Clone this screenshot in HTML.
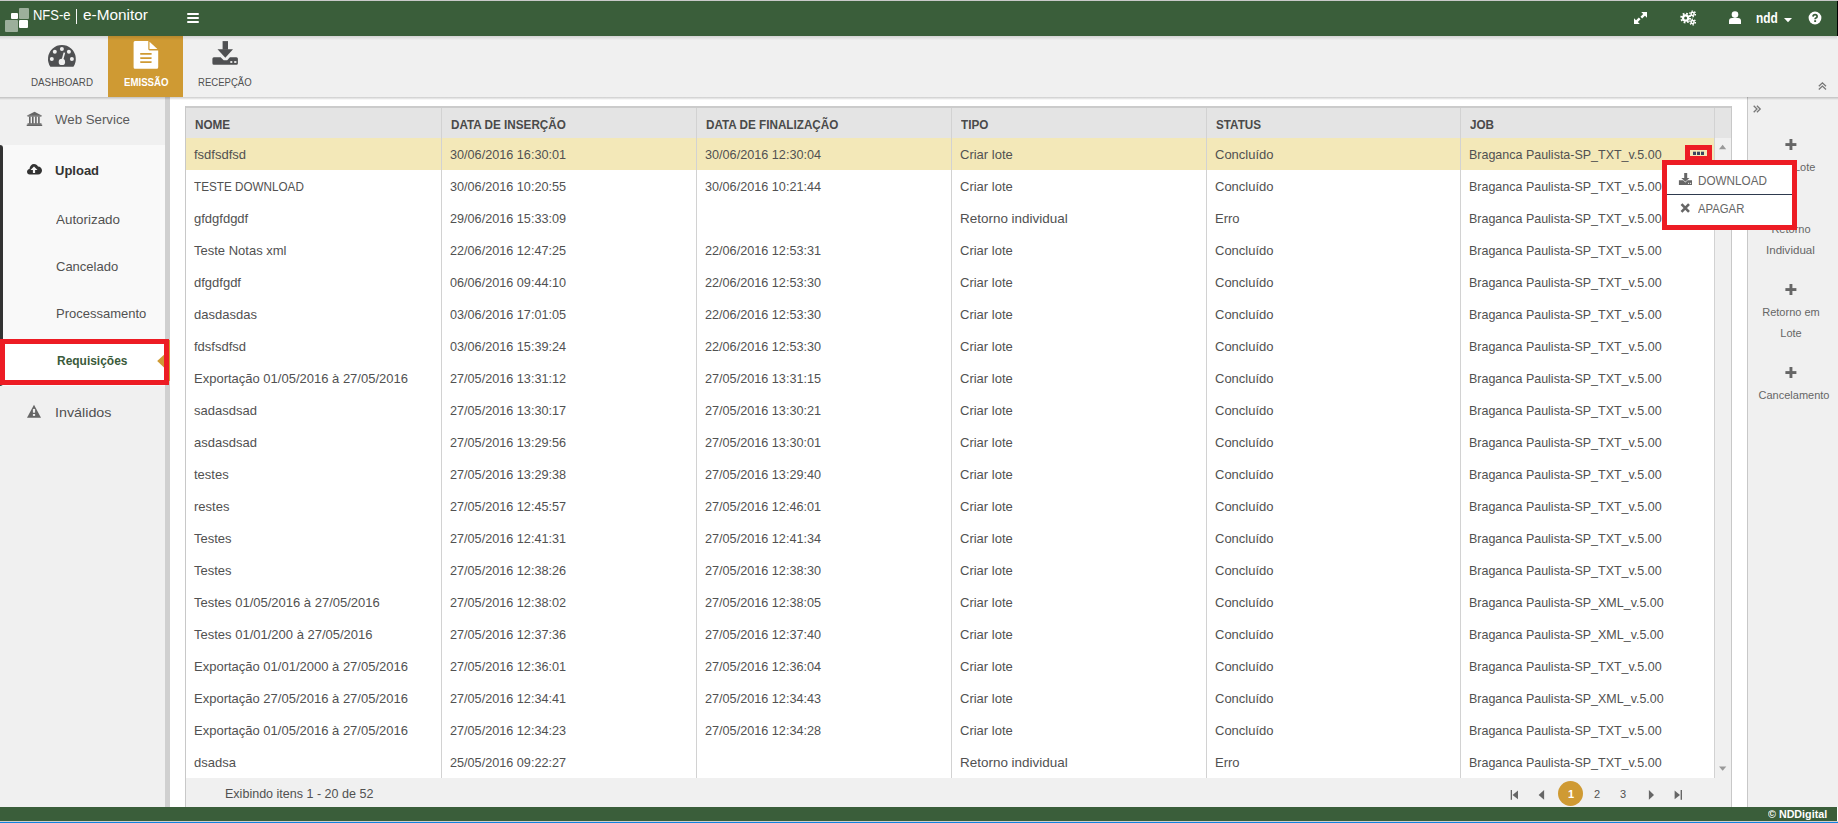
<!DOCTYPE html>
<html><head><meta charset="utf-8">
<style>
*{box-sizing:border-box;margin:0;padding:0}
html,body{width:1838px;height:823px;overflow:hidden;background:#fff;font-family:"Liberation Sans",sans-serif;color:#555;position:relative}
.a{position:absolute}
.t{position:absolute;white-space:nowrap;line-height:1}
svg.a{overflow:visible}
</style></head><body>
<div class="a" style="left:0px;top:0px;width:1838px;height:1px;background:#c9c9c9;"></div>
<div class="a" style="left:0px;top:1px;width:1837px;height:35px;background:#3a5e3a;"></div>
<div class="a" style="left:1837px;top:1px;width:1px;height:37px;background:#000;"></div>
<div class="a" style="left:0px;top:36px;width:1838px;height:61px;background:#f0f0f0;"></div>
<div class="a" style="left:108px;top:36px;width:75px;height:61px;background:#cf9a33;"></div>
<div class="a" style="left:0px;top:97px;width:165px;height:710px;background:#f0f0f0;"></div>
<div class="a" style="left:3px;top:145px;width:162px;height:241px;background:#f9f9f9;"></div>
<div class="a" style="left:0px;top:145px;width:3px;height:241px;background:#333;border-radius:0 3px 3px 0"></div>
<div class="a" style="left:165px;top:97px;width:5px;height:710px;background:#d0d0d0;"></div>
<div class="a" style="left:1747px;top:97px;width:1px;height:710px;background:#c8c8c8;"></div>
<div class="a" style="left:1748px;top:97px;width:90px;height:710px;background:#f0f0f0;"></div>
<div class="a" style="left:0px;top:97px;width:1838px;height:3px;background:linear-gradient(rgba(0,0,0,0.2),rgba(0,0,0,0.1) 50%,rgba(0,0,0,0));"></div>
<div class="a" style="left:0px;top:36px;width:1837px;height:4px;background:linear-gradient(rgba(0,0,0,0.12),rgba(0,0,0,0));"></div>
<div class="a" style="left:0px;top:807px;width:1837px;height:14px;background:#3a5e3a;"></div>
<div class="a" style="left:0px;top:821px;width:1838px;height:1px;background:#cfcfcf;"></div>
<div class="a" style="left:0px;top:822px;width:1838px;height:1px;background:#0f82e0;"></div>
<div class="a" style="left:185px;top:106px;width:1547px;height:2px;background:#cbcbcb;"></div>
<div class="a" style="left:185px;top:108px;width:1547px;height:30px;background:#e4e4e4;"></div>
<div class="a" style="left:185px;top:138px;width:1529px;height:640px;background:#ffffff;"></div>
<div class="a" style="left:1714px;top:138px;width:18px;height:640px;background:#f0f0f0;"></div>
<div class="a" style="left:185px;top:778px;width:1547px;height:29px;background:#f0f0f0;"></div>
<div class="a" style="left:186px;top:138px;width:1528px;height:32px;background:#f3e8b8;"></div>
<div class="a" style="left:185px;top:106px;width:1px;height:701px;background:#c8c8c8;"></div>
<div class="a" style="left:1731px;top:106px;width:1px;height:701px;background:#c8c8c8;"></div>
<div class="a" style="left:441px;top:108px;width:1px;height:670px;background:#d2d2d2;"></div>
<div class="a" style="left:696px;top:108px;width:1px;height:670px;background:#d2d2d2;"></div>
<div class="a" style="left:951px;top:108px;width:1px;height:670px;background:#d2d2d2;"></div>
<div class="a" style="left:1206px;top:108px;width:1px;height:670px;background:#d2d2d2;"></div>
<div class="a" style="left:1460px;top:108px;width:1px;height:670px;background:#d2d2d2;"></div>
<div class="a" style="left:1714px;top:108px;width:1px;height:670px;background:#d2d2d2;"></div>
<div class="t" style="left:195px;top:118.00px;font-size:13px;font-weight:bold;color:#4a4a4a;transform:scaleX(0.9);transform-origin:0 0;">NOME</div>
<div class="t" style="left:451px;top:118.00px;font-size:13px;font-weight:bold;color:#4a4a4a;transform:scaleX(0.9);transform-origin:0 0;">DATA DE INSERÇÃO</div>
<div class="t" style="left:706px;top:118.00px;font-size:13px;font-weight:bold;color:#4a4a4a;transform:scaleX(0.9);transform-origin:0 0;">DATA DE FINALIZAÇÃO</div>
<div class="t" style="left:961px;top:118.00px;font-size:13px;font-weight:bold;color:#4a4a4a;transform:scaleX(0.9);transform-origin:0 0;">TIPO</div>
<div class="t" style="left:1216px;top:118.00px;font-size:13px;font-weight:bold;color:#4a4a4a;transform:scaleX(0.9);transform-origin:0 0;">STATUS</div>
<div class="t" style="left:1470px;top:118.00px;font-size:13px;font-weight:bold;color:#4a4a4a;transform:scaleX(0.9);transform-origin:0 0;">JOB</div>
<div class="t" style="left:194px;top:148.00px;font-size:13px;font-weight:normal;color:#515151;">fsdfsdfsd</div>
<div class="t" style="left:450px;top:148.00px;font-size:13px;font-weight:normal;color:#515151;transform:scaleX(0.973);transform-origin:0 0;">30/06/2016 16:30:01</div>
<div class="t" style="left:705px;top:148.00px;font-size:13px;font-weight:normal;color:#515151;transform:scaleX(0.973);transform-origin:0 0;">30/06/2016 12:30:04</div>
<div class="t" style="left:960px;top:148.00px;font-size:13px;font-weight:normal;color:#515151;">Criar lote</div>
<div class="t" style="left:1215px;top:148.00px;font-size:13px;font-weight:normal;color:#515151;">Concluído</div>
<div class="t" style="left:1469px;top:148.00px;font-size:13px;font-weight:normal;color:#515151;transform:scaleX(0.96);transform-origin:0 0;">Braganca Paulista-SP_TXT_v.5.00</div>
<div class="t" style="left:194px;top:180.00px;font-size:13px;font-weight:normal;color:#515151;transform:scaleX(0.9);transform-origin:0 0;">TESTE DOWNLOAD</div>
<div class="t" style="left:450px;top:180.00px;font-size:13px;font-weight:normal;color:#515151;transform:scaleX(0.973);transform-origin:0 0;">30/06/2016 10:20:55</div>
<div class="t" style="left:705px;top:180.00px;font-size:13px;font-weight:normal;color:#515151;transform:scaleX(0.973);transform-origin:0 0;">30/06/2016 10:21:44</div>
<div class="t" style="left:960px;top:180.00px;font-size:13px;font-weight:normal;color:#515151;">Criar lote</div>
<div class="t" style="left:1215px;top:180.00px;font-size:13px;font-weight:normal;color:#515151;">Concluído</div>
<div class="t" style="left:1469px;top:180.00px;font-size:13px;font-weight:normal;color:#515151;transform:scaleX(0.96);transform-origin:0 0;">Braganca Paulista-SP_TXT_v.5.00</div>
<div class="t" style="left:194px;top:212.00px;font-size:13px;font-weight:normal;color:#515151;">gfdgfdgdf</div>
<div class="t" style="left:450px;top:212.00px;font-size:13px;font-weight:normal;color:#515151;transform:scaleX(0.973);transform-origin:0 0;">29/06/2016 15:33:09</div>
<div class="t" style="left:960px;top:212.00px;font-size:13px;font-weight:normal;color:#515151;transform:scaleX(1.035);transform-origin:0 0;">Retorno individual</div>
<div class="t" style="left:1215px;top:212.00px;font-size:13px;font-weight:normal;color:#515151;">Erro</div>
<div class="t" style="left:1469px;top:212.00px;font-size:13px;font-weight:normal;color:#515151;transform:scaleX(0.96);transform-origin:0 0;">Braganca Paulista-SP_TXT_v.5.00</div>
<div class="t" style="left:194px;top:244.00px;font-size:13px;font-weight:normal;color:#515151;">Teste Notas xml</div>
<div class="t" style="left:450px;top:244.00px;font-size:13px;font-weight:normal;color:#515151;transform:scaleX(0.973);transform-origin:0 0;">22/06/2016 12:47:25</div>
<div class="t" style="left:705px;top:244.00px;font-size:13px;font-weight:normal;color:#515151;transform:scaleX(0.973);transform-origin:0 0;">22/06/2016 12:53:31</div>
<div class="t" style="left:960px;top:244.00px;font-size:13px;font-weight:normal;color:#515151;">Criar lote</div>
<div class="t" style="left:1215px;top:244.00px;font-size:13px;font-weight:normal;color:#515151;">Concluído</div>
<div class="t" style="left:1469px;top:244.00px;font-size:13px;font-weight:normal;color:#515151;transform:scaleX(0.96);transform-origin:0 0;">Braganca Paulista-SP_TXT_v.5.00</div>
<div class="t" style="left:194px;top:276.00px;font-size:13px;font-weight:normal;color:#515151;">dfgdfgdf</div>
<div class="t" style="left:450px;top:276.00px;font-size:13px;font-weight:normal;color:#515151;transform:scaleX(0.973);transform-origin:0 0;">06/06/2016 09:44:10</div>
<div class="t" style="left:705px;top:276.00px;font-size:13px;font-weight:normal;color:#515151;transform:scaleX(0.973);transform-origin:0 0;">22/06/2016 12:53:30</div>
<div class="t" style="left:960px;top:276.00px;font-size:13px;font-weight:normal;color:#515151;">Criar lote</div>
<div class="t" style="left:1215px;top:276.00px;font-size:13px;font-weight:normal;color:#515151;">Concluído</div>
<div class="t" style="left:1469px;top:276.00px;font-size:13px;font-weight:normal;color:#515151;transform:scaleX(0.96);transform-origin:0 0;">Braganca Paulista-SP_TXT_v.5.00</div>
<div class="t" style="left:194px;top:308.00px;font-size:13px;font-weight:normal;color:#515151;">dasdasdas</div>
<div class="t" style="left:450px;top:308.00px;font-size:13px;font-weight:normal;color:#515151;transform:scaleX(0.973);transform-origin:0 0;">03/06/2016 17:01:05</div>
<div class="t" style="left:705px;top:308.00px;font-size:13px;font-weight:normal;color:#515151;transform:scaleX(0.973);transform-origin:0 0;">22/06/2016 12:53:30</div>
<div class="t" style="left:960px;top:308.00px;font-size:13px;font-weight:normal;color:#515151;">Criar lote</div>
<div class="t" style="left:1215px;top:308.00px;font-size:13px;font-weight:normal;color:#515151;">Concluído</div>
<div class="t" style="left:1469px;top:308.00px;font-size:13px;font-weight:normal;color:#515151;transform:scaleX(0.96);transform-origin:0 0;">Braganca Paulista-SP_TXT_v.5.00</div>
<div class="t" style="left:194px;top:340.00px;font-size:13px;font-weight:normal;color:#515151;">fdsfsdfsd</div>
<div class="t" style="left:450px;top:340.00px;font-size:13px;font-weight:normal;color:#515151;transform:scaleX(0.973);transform-origin:0 0;">03/06/2016 15:39:24</div>
<div class="t" style="left:705px;top:340.00px;font-size:13px;font-weight:normal;color:#515151;transform:scaleX(0.973);transform-origin:0 0;">22/06/2016 12:53:30</div>
<div class="t" style="left:960px;top:340.00px;font-size:13px;font-weight:normal;color:#515151;">Criar lote</div>
<div class="t" style="left:1215px;top:340.00px;font-size:13px;font-weight:normal;color:#515151;">Concluído</div>
<div class="t" style="left:1469px;top:340.00px;font-size:13px;font-weight:normal;color:#515151;transform:scaleX(0.96);transform-origin:0 0;">Braganca Paulista-SP_TXT_v.5.00</div>
<div class="t" style="left:194px;top:372.00px;font-size:13px;font-weight:normal;color:#515151;">Exportação 01/05/2016 à 27/05/2016</div>
<div class="t" style="left:450px;top:372.00px;font-size:13px;font-weight:normal;color:#515151;transform:scaleX(0.973);transform-origin:0 0;">27/05/2016 13:31:12</div>
<div class="t" style="left:705px;top:372.00px;font-size:13px;font-weight:normal;color:#515151;transform:scaleX(0.973);transform-origin:0 0;">27/05/2016 13:31:15</div>
<div class="t" style="left:960px;top:372.00px;font-size:13px;font-weight:normal;color:#515151;">Criar lote</div>
<div class="t" style="left:1215px;top:372.00px;font-size:13px;font-weight:normal;color:#515151;">Concluído</div>
<div class="t" style="left:1469px;top:372.00px;font-size:13px;font-weight:normal;color:#515151;transform:scaleX(0.96);transform-origin:0 0;">Braganca Paulista-SP_TXT_v.5.00</div>
<div class="t" style="left:194px;top:404.00px;font-size:13px;font-weight:normal;color:#515151;">sadasdsad</div>
<div class="t" style="left:450px;top:404.00px;font-size:13px;font-weight:normal;color:#515151;transform:scaleX(0.973);transform-origin:0 0;">27/05/2016 13:30:17</div>
<div class="t" style="left:705px;top:404.00px;font-size:13px;font-weight:normal;color:#515151;transform:scaleX(0.973);transform-origin:0 0;">27/05/2016 13:30:21</div>
<div class="t" style="left:960px;top:404.00px;font-size:13px;font-weight:normal;color:#515151;">Criar lote</div>
<div class="t" style="left:1215px;top:404.00px;font-size:13px;font-weight:normal;color:#515151;">Concluído</div>
<div class="t" style="left:1469px;top:404.00px;font-size:13px;font-weight:normal;color:#515151;transform:scaleX(0.96);transform-origin:0 0;">Braganca Paulista-SP_TXT_v.5.00</div>
<div class="t" style="left:194px;top:436.00px;font-size:13px;font-weight:normal;color:#515151;">asdasdsad</div>
<div class="t" style="left:450px;top:436.00px;font-size:13px;font-weight:normal;color:#515151;transform:scaleX(0.973);transform-origin:0 0;">27/05/2016 13:29:56</div>
<div class="t" style="left:705px;top:436.00px;font-size:13px;font-weight:normal;color:#515151;transform:scaleX(0.973);transform-origin:0 0;">27/05/2016 13:30:01</div>
<div class="t" style="left:960px;top:436.00px;font-size:13px;font-weight:normal;color:#515151;">Criar lote</div>
<div class="t" style="left:1215px;top:436.00px;font-size:13px;font-weight:normal;color:#515151;">Concluído</div>
<div class="t" style="left:1469px;top:436.00px;font-size:13px;font-weight:normal;color:#515151;transform:scaleX(0.96);transform-origin:0 0;">Braganca Paulista-SP_TXT_v.5.00</div>
<div class="t" style="left:194px;top:468.00px;font-size:13px;font-weight:normal;color:#515151;">testes</div>
<div class="t" style="left:450px;top:468.00px;font-size:13px;font-weight:normal;color:#515151;transform:scaleX(0.973);transform-origin:0 0;">27/05/2016 13:29:38</div>
<div class="t" style="left:705px;top:468.00px;font-size:13px;font-weight:normal;color:#515151;transform:scaleX(0.973);transform-origin:0 0;">27/05/2016 13:29:40</div>
<div class="t" style="left:960px;top:468.00px;font-size:13px;font-weight:normal;color:#515151;">Criar lote</div>
<div class="t" style="left:1215px;top:468.00px;font-size:13px;font-weight:normal;color:#515151;">Concluído</div>
<div class="t" style="left:1469px;top:468.00px;font-size:13px;font-weight:normal;color:#515151;transform:scaleX(0.96);transform-origin:0 0;">Braganca Paulista-SP_TXT_v.5.00</div>
<div class="t" style="left:194px;top:500.00px;font-size:13px;font-weight:normal;color:#515151;">restes</div>
<div class="t" style="left:450px;top:500.00px;font-size:13px;font-weight:normal;color:#515151;transform:scaleX(0.973);transform-origin:0 0;">27/05/2016 12:45:57</div>
<div class="t" style="left:705px;top:500.00px;font-size:13px;font-weight:normal;color:#515151;transform:scaleX(0.973);transform-origin:0 0;">27/05/2016 12:46:01</div>
<div class="t" style="left:960px;top:500.00px;font-size:13px;font-weight:normal;color:#515151;">Criar lote</div>
<div class="t" style="left:1215px;top:500.00px;font-size:13px;font-weight:normal;color:#515151;">Concluído</div>
<div class="t" style="left:1469px;top:500.00px;font-size:13px;font-weight:normal;color:#515151;transform:scaleX(0.96);transform-origin:0 0;">Braganca Paulista-SP_TXT_v.5.00</div>
<div class="t" style="left:194px;top:532.00px;font-size:13px;font-weight:normal;color:#515151;">Testes</div>
<div class="t" style="left:450px;top:532.00px;font-size:13px;font-weight:normal;color:#515151;transform:scaleX(0.973);transform-origin:0 0;">27/05/2016 12:41:31</div>
<div class="t" style="left:705px;top:532.00px;font-size:13px;font-weight:normal;color:#515151;transform:scaleX(0.973);transform-origin:0 0;">27/05/2016 12:41:34</div>
<div class="t" style="left:960px;top:532.00px;font-size:13px;font-weight:normal;color:#515151;">Criar lote</div>
<div class="t" style="left:1215px;top:532.00px;font-size:13px;font-weight:normal;color:#515151;">Concluído</div>
<div class="t" style="left:1469px;top:532.00px;font-size:13px;font-weight:normal;color:#515151;transform:scaleX(0.96);transform-origin:0 0;">Braganca Paulista-SP_TXT_v.5.00</div>
<div class="t" style="left:194px;top:564.00px;font-size:13px;font-weight:normal;color:#515151;">Testes</div>
<div class="t" style="left:450px;top:564.00px;font-size:13px;font-weight:normal;color:#515151;transform:scaleX(0.973);transform-origin:0 0;">27/05/2016 12:38:26</div>
<div class="t" style="left:705px;top:564.00px;font-size:13px;font-weight:normal;color:#515151;transform:scaleX(0.973);transform-origin:0 0;">27/05/2016 12:38:30</div>
<div class="t" style="left:960px;top:564.00px;font-size:13px;font-weight:normal;color:#515151;">Criar lote</div>
<div class="t" style="left:1215px;top:564.00px;font-size:13px;font-weight:normal;color:#515151;">Concluído</div>
<div class="t" style="left:1469px;top:564.00px;font-size:13px;font-weight:normal;color:#515151;transform:scaleX(0.96);transform-origin:0 0;">Braganca Paulista-SP_TXT_v.5.00</div>
<div class="t" style="left:194px;top:596.00px;font-size:13px;font-weight:normal;color:#515151;">Testes 01/05/2016 à 27/05/2016</div>
<div class="t" style="left:450px;top:596.00px;font-size:13px;font-weight:normal;color:#515151;transform:scaleX(0.973);transform-origin:0 0;">27/05/2016 12:38:02</div>
<div class="t" style="left:705px;top:596.00px;font-size:13px;font-weight:normal;color:#515151;transform:scaleX(0.973);transform-origin:0 0;">27/05/2016 12:38:05</div>
<div class="t" style="left:960px;top:596.00px;font-size:13px;font-weight:normal;color:#515151;">Criar lote</div>
<div class="t" style="left:1215px;top:596.00px;font-size:13px;font-weight:normal;color:#515151;">Concluído</div>
<div class="t" style="left:1469px;top:596.00px;font-size:13px;font-weight:normal;color:#515151;transform:scaleX(0.96);transform-origin:0 0;">Braganca Paulista-SP_XML_v.5.00</div>
<div class="t" style="left:194px;top:628.00px;font-size:13px;font-weight:normal;color:#515151;">Testes 01/01/200 à 27/05/2016</div>
<div class="t" style="left:450px;top:628.00px;font-size:13px;font-weight:normal;color:#515151;transform:scaleX(0.973);transform-origin:0 0;">27/05/2016 12:37:36</div>
<div class="t" style="left:705px;top:628.00px;font-size:13px;font-weight:normal;color:#515151;transform:scaleX(0.973);transform-origin:0 0;">27/05/2016 12:37:40</div>
<div class="t" style="left:960px;top:628.00px;font-size:13px;font-weight:normal;color:#515151;">Criar lote</div>
<div class="t" style="left:1215px;top:628.00px;font-size:13px;font-weight:normal;color:#515151;">Concluído</div>
<div class="t" style="left:1469px;top:628.00px;font-size:13px;font-weight:normal;color:#515151;transform:scaleX(0.96);transform-origin:0 0;">Braganca Paulista-SP_XML_v.5.00</div>
<div class="t" style="left:194px;top:660.00px;font-size:13px;font-weight:normal;color:#515151;">Exportação 01/01/2000 à 27/05/2016</div>
<div class="t" style="left:450px;top:660.00px;font-size:13px;font-weight:normal;color:#515151;transform:scaleX(0.973);transform-origin:0 0;">27/05/2016 12:36:01</div>
<div class="t" style="left:705px;top:660.00px;font-size:13px;font-weight:normal;color:#515151;transform:scaleX(0.973);transform-origin:0 0;">27/05/2016 12:36:04</div>
<div class="t" style="left:960px;top:660.00px;font-size:13px;font-weight:normal;color:#515151;">Criar lote</div>
<div class="t" style="left:1215px;top:660.00px;font-size:13px;font-weight:normal;color:#515151;">Concluído</div>
<div class="t" style="left:1469px;top:660.00px;font-size:13px;font-weight:normal;color:#515151;transform:scaleX(0.96);transform-origin:0 0;">Braganca Paulista-SP_TXT_v.5.00</div>
<div class="t" style="left:194px;top:692.00px;font-size:13px;font-weight:normal;color:#515151;">Exportação 27/05/2016 à 27/05/2016</div>
<div class="t" style="left:450px;top:692.00px;font-size:13px;font-weight:normal;color:#515151;transform:scaleX(0.973);transform-origin:0 0;">27/05/2016 12:34:41</div>
<div class="t" style="left:705px;top:692.00px;font-size:13px;font-weight:normal;color:#515151;transform:scaleX(0.973);transform-origin:0 0;">27/05/2016 12:34:43</div>
<div class="t" style="left:960px;top:692.00px;font-size:13px;font-weight:normal;color:#515151;">Criar lote</div>
<div class="t" style="left:1215px;top:692.00px;font-size:13px;font-weight:normal;color:#515151;">Concluído</div>
<div class="t" style="left:1469px;top:692.00px;font-size:13px;font-weight:normal;color:#515151;transform:scaleX(0.96);transform-origin:0 0;">Braganca Paulista-SP_XML_v.5.00</div>
<div class="t" style="left:194px;top:724.00px;font-size:13px;font-weight:normal;color:#515151;">Exportação 01/05/2016 à 27/05/2016</div>
<div class="t" style="left:450px;top:724.00px;font-size:13px;font-weight:normal;color:#515151;transform:scaleX(0.973);transform-origin:0 0;">27/05/2016 12:34:23</div>
<div class="t" style="left:705px;top:724.00px;font-size:13px;font-weight:normal;color:#515151;transform:scaleX(0.973);transform-origin:0 0;">27/05/2016 12:34:28</div>
<div class="t" style="left:960px;top:724.00px;font-size:13px;font-weight:normal;color:#515151;">Criar lote</div>
<div class="t" style="left:1215px;top:724.00px;font-size:13px;font-weight:normal;color:#515151;">Concluído</div>
<div class="t" style="left:1469px;top:724.00px;font-size:13px;font-weight:normal;color:#515151;transform:scaleX(0.96);transform-origin:0 0;">Braganca Paulista-SP_TXT_v.5.00</div>
<div class="t" style="left:194px;top:756.00px;font-size:13px;font-weight:normal;color:#515151;">dsadsa</div>
<div class="t" style="left:450px;top:756.00px;font-size:13px;font-weight:normal;color:#515151;transform:scaleX(0.973);transform-origin:0 0;">25/05/2016 09:22:27</div>
<div class="t" style="left:960px;top:756.00px;font-size:13px;font-weight:normal;color:#515151;transform:scaleX(1.035);transform-origin:0 0;">Retorno individual</div>
<div class="t" style="left:1215px;top:756.00px;font-size:13px;font-weight:normal;color:#515151;">Erro</div>
<div class="t" style="left:1469px;top:756.00px;font-size:13px;font-weight:normal;color:#515151;transform:scaleX(0.96);transform-origin:0 0;">Braganca Paulista-SP_TXT_v.5.00</div>
<div class="t" style="left:225px;top:787.00px;font-size:13px;font-weight:normal;color:#515151;transform:scaleX(0.964);transform-origin:0 0;">Exibindo itens 1 - 20 de 52</div>
<div class="t" style="left:55px;top:113.00px;font-size:13px;font-weight:normal;color:#5a5a5a;transform:scaleX(1.02);transform-origin:0 0;">Web Service</div>
<div class="t" style="left:55px;top:164.00px;font-size:13px;font-weight:bold;color:#333;">Upload</div>
<div class="t" style="left:56px;top:213.00px;font-size:13px;font-weight:normal;color:#515151;transform:scaleX(1.03);transform-origin:0 0;">Autorizado</div>
<div class="t" style="left:56px;top:260.00px;font-size:13px;font-weight:normal;color:#515151;">Cancelado</div>
<div class="t" style="left:56px;top:307.00px;font-size:13px;font-weight:normal;color:#515151;">Processamento</div>
<div class="t" style="left:55px;top:406.00px;font-size:13px;font-weight:normal;color:#515151;transform:scaleX(1.1);transform-origin:0 0;">Inválidos</div>
<div class="a" style="left:0px;top:339px;width:169px;height:46px;background:#ed1c24;"></div>
<div class="a" style="left:5px;top:344px;width:159px;height:36px;background:#ffffff;"></div>
<div class="a" style="left:169px;top:340px;width:1px;height:41px;background:#cf9a33;"></div>
<div class="t" style="left:57px;top:354.00px;font-size:13px;font-weight:bold;color:#3a5a3a;transform:scaleX(0.92);transform-origin:0 0;">Requisições</div>
<div class="t" style="left:31px;top:76.69px;font-size:11px;font-weight:normal;color:#515151;transform:scaleX(0.89);transform-origin:0 0;">DASHBOARD</div>
<div class="t" style="left:124px;top:76.69px;font-size:11px;font-weight:bold;color:#fff;transform:scaleX(0.878);transform-origin:0 0;">EMISSÃO</div>
<div class="t" style="left:198px;top:76.69px;font-size:11px;font-weight:normal;color:#515151;transform:scaleX(0.868);transform-origin:0 0;">RECEPÇÃO</div>
<div class="t" style="left:32.5px;top:7.30px;font-size:15px;font-weight:normal;color:#fff;transform:scaleX(0.865);transform-origin:0 0;">NFS-e</div>
<div class="a" style="left:76.2px;top:9px;width:1.3px;height:14.5px;background:rgba(255,255,255,0.95);"></div>
<div class="t" style="left:82.5px;top:7.30px;font-size:15px;font-weight:normal;color:#fff;transform:scaleX(1.025);transform-origin:0 0;">e-Monitor</div>
<div class="t" style="left:1755.5px;top:10.75px;font-size:14px;font-weight:bold;color:#fff;transform:scaleX(0.85);transform-origin:0 0;">ndd</div>
<div class="t" style="left:1768px;top:808.69px;font-size:11px;font-weight:bold;color:#fff;transform:scaleX(0.975);transform-origin:0 0;">© NDDigital</div>
<div class="t" style="left:1731px;width:120px;text-align:center;top:223.69px;font-size:11px;color:#666">Retorno</div>
<div class="t" style="left:1766px;top:244.69px;font-size:11px;color:#666;transform:scaleX(1.05);transform-origin:0 0">Individual</div>
<div class="t" style="left:1731px;width:120px;text-align:center;top:306.69px;font-size:11px;color:#666">Retorno em</div>
<div class="t" style="left:1731px;width:120px;text-align:center;top:327.69px;font-size:11px;color:#666">Lote</div>
<div class="t" style="left:1734px;width:120px;text-align:center;top:389.69px;font-size:11px;color:#666">Cancelamento</div>
<div class="t" style="left:1794px;top:161.69px;font-size:11px;font-weight:normal;color:#666;">Lote</div>
<div class="a" style="left:1685px;top:145px;width:27px;height:20px;background:#ed1c24;"></div>
<div class="a" style="left:1690px;top:150px;width:17px;height:6px;background:#f3e8b8;"></div>
<div class="a" style="left:1662px;top:160px;width:135px;height:70px;background:#ed1c24;"></div>
<div class="a" style="left:1667px;top:165px;width:125px;height:60px;background:#ffffff;"></div>
<div class="a" style="left:1667px;top:194px;width:125px;height:1px;background:#2e3a4e;"></div>
<div class="t" style="left:1698px;top:174.00px;font-size:13px;font-weight:normal;color:#666;transform:scaleX(0.9);transform-origin:0 0;">DOWNLOAD</div>
<div class="t" style="left:1698px;top:202.00px;font-size:13px;font-weight:normal;color:#666;transform:scaleX(0.87);transform-origin:0 0;">APAGAR</div>
<div class="a" style="left:1558px;top:781px;width:25px;height:25px;border-radius:50%;background:#cf9a33"></div>
<div class="t" style="left:1568px;top:788.69px;font-size:11px;font-weight:bold;color:#fff;">1</div>
<div class="t" style="left:1594px;top:788.69px;font-size:11px;font-weight:normal;color:#515151;">2</div>
<div class="t" style="left:1620px;top:788.69px;font-size:11px;font-weight:normal;color:#515151;">3</div>
<div class="a" style="left:11px;top:13px;width:7px;height:6px;background:#ffffff;border-radius:1px"></div>
<div class="a" style="left:19px;top:8px;width:10px;height:11px;background:#9caf9b;border-radius:1px"></div>
<div class="a" style="left:5px;top:20px;width:13px;height:12px;background:#9caf9b;border-radius:1px"></div>
<div class="a" style="left:19px;top:20px;width:9px;height:8px;background:#ffffff;border-radius:1px"></div>
<div class="a" style="left:187px;top:13px;width:12px;height:2px;background:#ffffff;border-radius:1px"></div>
<div class="a" style="left:187px;top:17px;width:12px;height:2px;background:#ffffff;border-radius:1px"></div>
<div class="a" style="left:187px;top:21px;width:12px;height:2px;background:#ffffff;border-radius:1px"></div>
<svg class="a" style="left:1634px;top:12px" width="13" height="12" viewBox="0 0 13 12"><path d="M7.2,0 L13,0 L13,5.8 Z" fill="#fff"/><path d="M0,6.2 L0,12 L5.8,12 Z" fill="#fff"/><path d="M11.3,1.7 L7.3,5.6 M5.7,6.4 L1.7,10.3" stroke="#fff" stroke-width="2.4"/></svg>
<svg class="a" style="left:1679px;top:10px" width="18" height="16" viewBox="0 0 18 16"><circle cx="6.6" cy="8" r="3.7" fill="#fff"/><circle cx="6.6" cy="8" r="4.4" fill="none" stroke="#fff" stroke-width="2" stroke-dasharray="1.75 1.705"/><circle cx="6.6" cy="8" r="1.5" fill="#3a5e3a"/><circle cx="13.6" cy="3.9" r="2.3" fill="#fff"/><circle cx="13.6" cy="3.9" r="2.8" fill="none" stroke="#fff" stroke-width="1.4" stroke-dasharray="1.45 1.48"/><circle cx="13.6" cy="3.9" r="0.8" fill="#3a5e3a"/><circle cx="13.6" cy="12.1" r="2.3" fill="#fff"/><circle cx="13.6" cy="12.1" r="2.8" fill="none" stroke="#fff" stroke-width="1.4" stroke-dasharray="1.45 1.48"/><circle cx="13.6" cy="12.1" r="0.8" fill="#3a5e3a"/></svg>
<svg class="a" style="left:1729px;top:11px" width="12" height="13" viewBox="0 0 12 13"><circle cx="6" cy="3.6" r="3.3" fill="#fff"/><path d="M0,13 L0,10 Q0,7 3,6.9 L9,6.9 Q12,7 12,10 L12,13 Z" fill="#fff"/></svg>
<svg class="a" style="left:1784px;top:18px" width="8" height="5" viewBox="0 0 8 5"><path d="M0,0 L8,0 L4,4.3 Z" fill="#fff"/></svg>
<svg class="a" style="left:1808px;top:11px" width="14" height="14" viewBox="0 0 14 14"><circle cx="7" cy="7" r="6.4" fill="#fff"/><path d="M5,5.6 Q5.1,3.7 7.1,3.7 Q9.1,3.7 9.1,5.4 Q9.1,6.5 7.9,7 Q7.1,7.4 7.1,8.3" fill="none" stroke="#3a5e3a" stroke-width="1.7"/><rect x="6.2" y="9.2" width="1.9" height="1.8" fill="#3a5e3a"/></svg>
<svg class="a" style="left:48px;top:45px" width="28" height="22" viewBox="0 0 28 22"><path d="M2.4,21.8 A13.9,13.9 0 1 1 25.4,21.8 Z" fill="#4f5052"/><g fill="#f0f0f0"><circle cx="13.9" cy="3.9" r="2"/><circle cx="6.8" cy="6.8" r="2"/><circle cx="20.9" cy="6.8" r="2"/><circle cx="3.8" cy="14" r="2"/><circle cx="23.9" cy="14" r="2"/><circle cx="13.9" cy="16.9" r="3.2"/></g><path d="M13.9,16.9 L16.4,7.6" stroke="#f0f0f0" stroke-width="1.7"/></svg>
<svg class="a" style="left:133px;top:41px" width="26" height="28" viewBox="0 0 26 28"><path d="M0.6,1.6 Q0.6,0.1 2,0.1 L15.3,0.1 L15.3,8 Q15.3,9.4 16.7,9.4 L25.2,9.4 L25.2,26.3 Q25.2,27.8 23.7,27.8 L2,27.8 Q0.6,27.8 0.6,26.3 Z" fill="#fff"/><path d="M16.5,0.7 L24.4,8 L16.5,8 Z" fill="#fff"/><g fill="#cf9a33"><rect x="7" y="12.1" width="11.8" height="1.7" rx="0.8"/><rect x="7" y="16.2" width="11.8" height="1.7" rx="0.8"/><rect x="7" y="20.2" width="11.8" height="1.7" rx="0.8"/></g></svg>
<svg class="a" style="left:212px;top:41px" width="26" height="24" viewBox="0 0 26 24"><rect x="10.6" y="0.1" width="5.4" height="8.6" fill="#4f5052"/><path d="M5.5,8.3 L21,8.3 L13.3,16.8 Z" fill="#4f5052"/><path d="M0.4,17.7 Q0.4,16.2 1.9,16.2 L8.6,16.2 L11.7,19.2 L15.2,19.2 L17.9,16.2 L24.4,16.2 Q25.9,16.2 25.9,17.7 L25.9,22.3 Q25.9,23.8 24.4,23.8 L1.9,23.8 Q0.4,23.8 0.4,22.3 Z" fill="#4f5052"/><rect x="18.3" y="20.1" width="2" height="1.8" fill="#f0f0f0"/><rect x="22.2" y="20.1" width="2.2" height="1.8" fill="#f0f0f0"/></svg>
<svg class="a" style="left:1818px;top:82px" width="9" height="8" viewBox="0 0 9 8"><path d="M0.8,4.3 L4.4,0.9 L8,4.3 M0.8,7.5 L4.4,4.1 L8,7.5" fill="none" stroke="#777" stroke-width="1.3"/></svg>
<svg class="a" style="left:26px;top:111px" width="17" height="16" viewBox="0 0 17 16"><path d="M8.5,0.8 L16.2,4.8 L0.7,4.8 Z" fill="#666"/><rect x="1.5" y="4.6" width="14" height="1" fill="#666"/><g fill="#666"><rect x="3" y="5.5" width="1.6" height="7.2"/><rect x="6" y="5.5" width="1.6" height="7.2"/><rect x="9.1" y="5.5" width="1.6" height="7.2"/><rect x="12.1" y="5.5" width="1.6" height="7.2"/></g><rect x="1.5" y="12.3" width="14" height="1.5" fill="#666"/><rect x="0.7" y="13.6" width="15.5" height="1.4" fill="#666"/></svg>
<svg class="a" style="left:27px;top:163px" width="16" height="12" viewBox="0 0 16 12"><path d="M2.6,11.6 C1.1,11.6 0,10.4 0,8.8 C0,7.3 1.1,6.1 2.5,5.9 C2.7,3 4.6,0.9 7,0.9 C8.9,0.9 10.3,2 11,3.5 C13.3,3.6 15,5.4 15,7.6 C15,9.8 13.3,11.6 11.1,11.6 Z" fill="#333"/><path d="M7,3.5 L10.5,7 L8.1,7 L8.1,10 L5.9,10 L5.9,7 L3.5,7 Z" fill="#f9f9f9"/></svg>
<svg class="a" style="left:27px;top:404px" width="15" height="14" viewBox="0 0 15 14"><path d="M7,0.7 L14,13.7 L0,13.7 Z" fill="#666"/><rect x="5.9" y="4.9" width="2.2" height="3.8" fill="#f0f0f0"/><rect x="5.9" y="10" width="2.2" height="1.9" fill="#f0f0f0"/></svg>
<svg class="a" style="left:157px;top:354px" width="7" height="14" viewBox="0 0 7 14"><path d="M7,0.7 L0.2,7 L7,13.4 Z" fill="#cf9a33"/></svg>
<svg class="a" style="left:1753px;top:105px" width="8" height="8" viewBox="0 0 8 8"><path d="M0.7,0.7 L4,4 L0.7,7.3 M3.9,0.7 L7.2,4 L3.9,7.3" fill="none" stroke="#777" stroke-width="1.3"/></svg>
<svg class="a" style="left:1785px;top:138.9px" width="12" height="11" viewBox="0 0 12 11"><rect x="0.4" y="4.1" width="11" height="2.9" fill="#666"/><rect x="4.5" y="0" width="2.9" height="11" fill="#666"/></svg>
<svg class="a" style="left:1785px;top:284.0px" width="12" height="11" viewBox="0 0 12 11"><rect x="0.4" y="4.1" width="11" height="2.9" fill="#666"/><rect x="4.5" y="0" width="2.9" height="11" fill="#666"/></svg>
<svg class="a" style="left:1785px;top:367.2px" width="12" height="11" viewBox="0 0 12 11"><rect x="0.4" y="4.1" width="11" height="2.9" fill="#666"/><rect x="4.5" y="0" width="2.9" height="11" fill="#666"/></svg>
<svg class="a" style="left:1693px;top:151px" width="11" height="4" viewBox="0 0 11 4"><g fill="#3a4660"><rect x="0" y="0.7" width="3" height="3.3"/><rect x="4" y="0.7" width="3" height="3.3"/><rect x="8" y="0.7" width="3" height="3.3"/></g></svg>
<svg class="a" style="left:1678px;top:172px" width="15" height="13" viewBox="0 0 15 13"><rect x="6.2" y="1" width="3" height="5.5" fill="#666"/><path d="M3.3,6 L11.5,6 L7.4,9.7 Z" fill="#666"/><path d="M0.9,8.3 L5.2,8.3 L7.4,10.4 L9.6,8.3 L14,8.3 L14,12.9 L0.9,12.9 Z" fill="#666"/><rect x="10" y="10.8" width="1.1" height="1" fill="#fff"/><rect x="12" y="10.8" width="1.1" height="1" fill="#fff"/></svg>
<svg class="a" style="left:1680px;top:203px" width="11" height="10" viewBox="0 0 11 10"><path d="M1.5,1.2 L9,8.8 M9,1.2 L1.5,8.8" stroke="#666" stroke-width="2.6"/></svg>
<svg class="a" style="left:1719px;top:144px" width="8" height="6" viewBox="0 0 8 6"><path d="M0,5.2 L7.2,5.2 L3.6,0.7 Z" fill="#999"/></svg>
<svg class="a" style="left:1719px;top:766px" width="8" height="5" viewBox="0 0 8 5"><path d="M0,0.5 L7.3,0.5 L3.65,4.7 Z" fill="#999"/></svg>
<svg class="a" style="left:1510px;top:790px" width="9" height="10" viewBox="0 0 9 10"><rect x="0.7" y="0" width="1.3" height="9.8" fill="#666"/><path d="M8,0.6 L2.5,4.9 L8,9.3 Z" fill="#666"/></svg>
<svg class="a" style="left:1538px;top:790px" width="7" height="10" viewBox="0 0 7 10"><path d="M6.1,0 L0.6,4.9 L6.1,9.8 Z" fill="#666"/></svg>
<svg class="a" style="left:1648px;top:790px" width="7" height="10" viewBox="0 0 7 10"><path d="M0.9,0 L6,4.9 L0.9,9.8 Z" fill="#666"/></svg>
<svg class="a" style="left:1674px;top:790px" width="9" height="10" viewBox="0 0 9 10"><path d="M0.6,0.6 L6,4.9 L0.6,9.3 Z" fill="#666"/><rect x="6.6" y="0" width="1.4" height="9.8" fill="#666"/></svg>
</body></html>
